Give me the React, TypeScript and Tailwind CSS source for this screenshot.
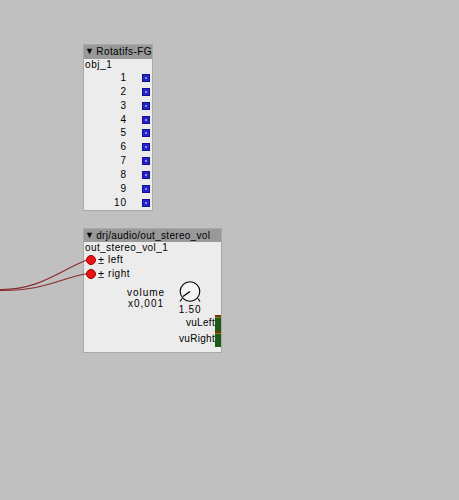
import React from "react";

const font = { fontFamily: '"Liberation Sans", Arial, sans-serif' };

function OutSquare() {
  return (
    <div className="w-[8px] h-[8px] bg-[#2424c8] border border-[#10108a] flex items-center justify-center">
      <div className="w-[2px] h-[2px] bg-[#8a8aff]" />
    </div>
  );
}

function Knob() {
  return (
    <svg width="26" height="23" viewBox="0 0 26 23" className="shrink-0">
      <circle cx="13" cy="10.5" r="9.8" fill="#f4f4f4" stroke="#000" strokeWidth="1.1" />
      <line x1="13" y1="10.5" x2="6" y2="15.5" stroke="#000" strokeWidth="1.4" />
      <line x1="5" y1="17.5" x2="3" y2="20.5" stroke="#000" strokeWidth="1.1" />
      <line x1="21" y1="17.5" x2="23" y2="20.5" stroke="#000" strokeWidth="1.1" />
    </svg>
  );
}

function Vu() {
  return (
    <div className="w-[6px] h-[16px] flex flex-col bg-[#1d5a17]">
      <div className="h-[2px] bg-[#6b3a0a]" />
      <div className="h-[1px] bg-[#8a7a10]" />
      <div className="flex-1 bg-[#1d5a17]" />
    </div>
  );
}

export default function App() {
  const rows = [1, 2, 3, 4, 5, 6, 7, 8, 9, 10];
  return (
    <div className="relative w-[459px] h-[500px] bg-[#c0c0c0] overflow-hidden text-[10px] text-black whitespace-nowrap" style={font}>
      {/* Rotatifs-FG */}
      <div className="absolute left-[83px] top-[44px] w-[70px] h-[167px] bg-[#ececec] border border-[#a8a8a8] flex flex-col">
        <div className="h-[14px] bg-[#999999] flex items-center pl-[1px] tracking-[0.4px] leading-none">
          <span className="text-[9px] mr-[2px]">▼</span>Rotatifs-FG
        </div>
        <div className="h-[12px] flex items-center pl-[1px] tracking-[0.6px] leading-none">obj_1</div>
        {rows.map((r) => (
          <div key={r} className="h-[14px] flex items-center leading-none">
            <div className="w-[43px] text-right tracking-[1px]">{r}</div>
            <div className="ml-[15px]">
              <OutSquare />
            </div>
          </div>
        ))}
      </div>

      {/* out_stereo_vol */}
      <div className="absolute left-[83px] top-[228px] w-[139px] h-[125px] bg-[#ececec] border border-[#a8a8a8] flex flex-col">
        <div className="h-[13px] bg-[#999999] flex items-center pl-[1px] tracking-[0.3px] leading-none">
          <span className="text-[9px] mr-[2px]">▼</span>drj/audio/out_stereo_vol
        </div>
        <div className="h-[11px] flex items-center pl-[1px] tracking-[0.4px] leading-none">out_stereo_vol_1</div>
        {["left", "right"].map((l) => (
          <div key={l} className="h-[14px] flex items-center leading-none">
            <div className="relative z-20 ml-[2px] w-[10px] h-[10px] rounded-full bg-[#e81414] border border-[#a00000]" />
            <span className="ml-[2px] text-[11px]">±</span>
            <span className="ml-[4px] tracking-[0.5px]">{l}</span>
          </div>
        ))}
        <div className="flex items-start h-[34px]">
          <div className="ml-[45px] w-[34px] flex flex-col items-center leading-none tracking-[1px] mt-[6px]">
            <div className="h-[11px] flex items-center">volume</div>
            <div className="h-[11px] flex items-center">x0,001</div>
          </div>
          <div className="ml-[14px] flex flex-col items-center">
            <Knob />
            <div className="leading-none mt-[1px] tracking-[0.8px]">1.50</div>
          </div>
        </div>
        <div className="flex flex-col items-end">
          <div className="flex items-end">
            <span className="leading-none mb-[3px] tracking-[0.3px]">vuLeft</span>
            <Vu />
          </div>
          <div className="flex items-end">
            <span className="leading-none mb-[3px] tracking-[0.3px]">vuRight</span>
            <Vu />
          </div>
        </div>
      </div>

      <svg className="absolute left-0 top-0 pointer-events-none" width="459" height="500">
        <path d="M0 289.5 C 40 290, 60 270, 88 259.5" fill="none" stroke="#8a2a2a" strokeWidth="1.2" />
        <path d="M0 290.5 C 45 291, 60 278, 88 273.5" fill="none" stroke="#8a2a2a" strokeWidth="1.2" />
      </svg>
    </div>
  );
}
